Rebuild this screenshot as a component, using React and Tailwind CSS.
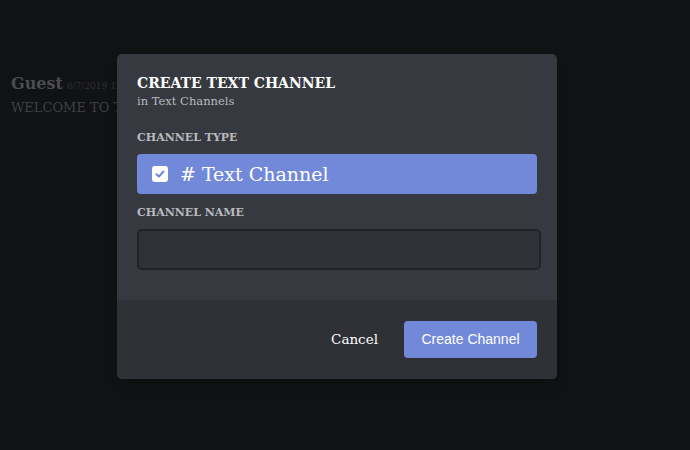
export default function App() {
  const slab = { fontFamily: '"DejaVu Serif", "Liberation Serif", serif' };
  return (
    <div className="relative w-[690px] h-[450px] overflow-hidden bg-[#111214]" style={slab}>
      {/* dimmed chat behind the overlay */}
      <div className="pt-[72px] pl-[11px] w-[117px] overflow-hidden whitespace-nowrap">
        <div className="flex items-baseline gap-[4px]">
          <span className="text-[16px] font-bold text-[#4b4c50]">Guest</span>
          <span className="text-[9px] text-[#2e2f33]">6/7/2019 12:48</span>
        </div>
        <div className="mt-[2px] text-[13px] text-[#3f4044]">WELCOME TO THE</div>
      </div>

      <div className="absolute left-[117px] top-[54px] w-[440px] rounded-[5px] overflow-hidden bg-[#36393f] shadow-lg">
        <div className="px-[20px] pt-[19px] pb-[30px]">
          <div className="text-[14px] font-bold leading-[20px] text-white">CREATE TEXT CHANNEL</div>
          <div className="text-[11.5px] leading-[16px] text-[#b9bbbe]">in Text Channels</div>

          <div className="mt-[21px] text-[11px] font-bold leading-[16px] text-[#b9bbbe]">CHANNEL TYPE</div>
          <div className="mt-[8px] h-[40px] w-[400px] rounded-[4px] bg-[#7289da] flex items-center pl-[15px]">
            <div className="w-[16px] h-[16px] rounded-[3px] bg-white flex items-center justify-center">
              <svg width="12" height="12" viewBox="0 0 12 12">
                <path d="M2.5 6.2 L5 8.5 L9.5 3.5" fill="none" stroke="#7289da" strokeWidth="2" strokeLinecap="round" strokeLinejoin="round" />
              </svg>
            </div>
            <span className="ml-[12px] text-[19px] text-white leading-none">#</span>
            <span className="ml-[6px] text-[19px] text-white leading-none">Text Channel</span>
          </div>

          <div className="mt-[11px] text-[11px] font-bold leading-[16px] text-[#b9bbbe]">CHANNEL NAME</div>
          <div className="mt-[8px] h-[41px] w-[404px] rounded-[5px] border-2 border-[#222326] bg-[#303237]" />
        </div>

        <div className="h-[79px] bg-[#2f3136] flex items-center justify-end pr-[20px]">
          <span className="text-[13.5px] text-white mr-[26px]">Cancel</span>
          <div className="h-[37px] w-[133px] rounded-[4px] bg-[#7289da] flex items-center justify-center text-[14px] text-white" style={{ fontFamily: '"Liberation Sans", Arial, sans-serif' }}>
            Create Channel
          </div>
        </div>
      </div>
    </div>
  );
}
